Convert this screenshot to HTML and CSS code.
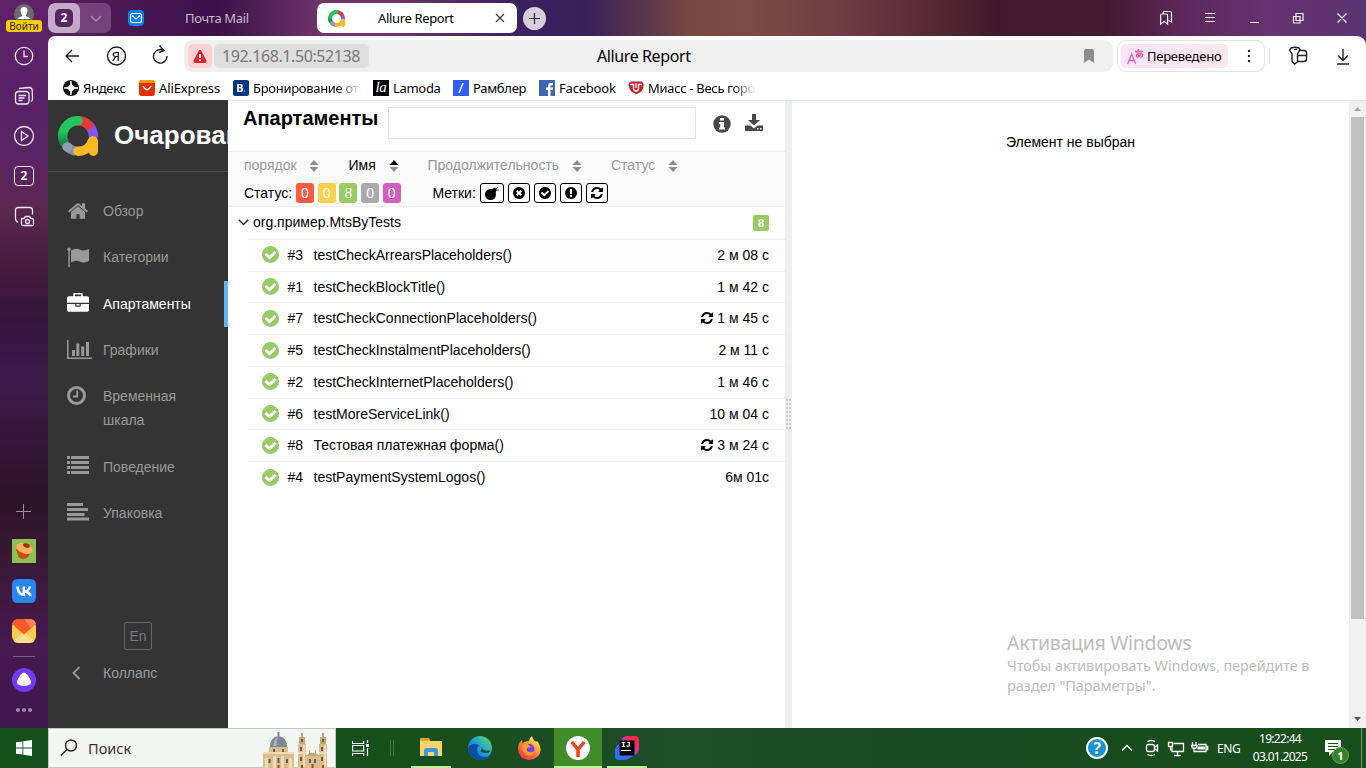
FILE: index.html
```html
<!DOCTYPE html>
<html lang="ru">
<head>
<meta charset="utf-8">
<title>Allure Report</title>
<link rel="stylesheet" href="styles.css">
</head>
<body>
<svg class="defs" width="0" height="0">
  <symbol id="refresh" viewBox="0 0 1792 1792"><path fill="currentColor" d="M1639 1056q0 5-1 7-64 268-268 434.5t-478 166.5q-146 0-282.5-55t-243.5-157l-129 129q-19 19-45 19t-45-19-19-45v-448q0-26 19-45t45-19h448q26 0 45 19t19 45-19 45l-137 137q71 66 161 102t187 36q134 0 250-65t186-179q11-17 53-117 8-23 30-23h192q13 0 22.5 9.5t9.5 22.5zm25-800v448q0 26-19 45t-45 19h-448q-26 0-45-19t-19-45 19-45l138-138q-148-137-349-137-134 0-250 65t-186 179q-11 17-53 117-8 23-30 23h-199q-13 0-22.5-9.5t-9.5-22.5v-7q65-268 270-434.5t480-166.500q146 0 284 55.500t245 156.500l130-129q19-19 45-19t45 19 19 45z"/></symbol>
  <symbol id="check" viewBox="128 128 1536 1536"><path fill="currentColor" d="M1412 734q0-28-18-46l-91-90q-19-19-45-19t-45 19l-408 407-226-226q-19-19-45-19t-45 19l-91 90q-18 18-18 46 0 27 18 45l362 362q19 19 45 19 27 0 46-19l543-543q18-18 18-45zm252 162q0 209-103 385.500t-279.500 279.500-385.500 103-385.500-103-279.500-279.500-103-385.500 103-385.500 279.500-279.500 385.500-103 385.500 103 279.500 279.500 103 385.500z"/></symbol>
  <symbol id="sort" viewBox="0 0 10 12"><path class="up" d="M5 0 9.500 5H.5z"/><path class="down" d="M5 12 .5 7h9z"/></symbol>
  <symbol id="allure" viewBox="0 0 40 40">
    <g fill="none" stroke-width="9.400" stroke-linecap="round">
      <path stroke="#8256f0" d="M32 10.500A15.300 15.300 0 0 1 35.300 20"/>
      <path stroke="#e03a3c" d="M20 4.700A15.300 15.300 0 0 1 30.800 9.200"/>
      <path stroke="#8291a8" d="M8.800 30.500A15.300 15.300 0 0 0 16 34.800"/>
      <path stroke="url(#gg)" d="M6 26.300A15.300 15.300 0 0 1 20 4.700"/>
      <path stroke="#8f9db2" d="M9.300 31l.5.4"/>
      <path stroke="#fbb924" d="M20 35.300A15.300 15.300 0 0 0 34.500 25M35.300 25V35.300"/>
    </g>
  </symbol>
  <linearGradient id="gg" x1="0" y1="1" x2="0" y2="0"><stop stop-color="#178a44"/><stop offset=".5" stop-color="#22c55e"/></linearGradient>
  <linearGradient id="edge" x1="0" y1="1" x2="1" y2="0"><stop stop-color="#0c59a4"/><stop offset=".5" stop-color="#1b9de2"/><stop offset="1" stop-color="#6be04a"/></linearGradient>
  <linearGradient id="fox" x1="0" y1="1" x2=".7" y2="0"><stop stop-color="#f5156c"/><stop offset=".5" stop-color="#ff7139"/><stop offset="1" stop-color="#fff44f"/></linearGradient>
  <linearGradient id="ij" x1="0" y1="1" x2="1" y2="0"><stop stop-color="#087cfa"/><stop offset=".5" stop-color="#6b57ff"/><stop offset=".75" stop-color="#fe2857"/></linearGradient>
</svg>

<div class="screen">
  <nav class="rail">
    <div class="login">
      <svg width="20" height="20" viewBox="0 0 20 20"><circle cx="10" cy="10" r="10" fill="#6e6a6d"/><path fill="#fff" d="M10 3c2.600 0 3.800 2 3.400 4.500-.2 1.700-1 2.700-1.400 3.200v1.500c2 .6 3.500 1.200 4.500 2.800H3.500c1-1.600 2.500-2.200 4.500-2.800v-1.500C7.500 10 6.800 9.200 6.600 7.500 6.300 5 7.400 3 10 3z"/></svg>
      <span class="login-tag">Войти</span>
    </div>
    <div class="cell"><svg width="24" height="24" class="line"><circle cx="12" cy="12" r="8.700"/><path d="M12 6.500V12.500h4"/></svg></div>
    <div class="cell"><svg width="24" height="24" class="line"><rect x="3.500" y="7.500" width="13.500" height="12.500" rx="3"/><path d="M7 4.500 17 3.500q3 0 3.200 2.500l.3 9q0 2-1.500 2.500M6.500 11.500h7.500M6.500 14h6M6.500 16.500h4"/></svg></div>
    <div class="cell"><svg width="24" height="24" class="line"><circle cx="12" cy="12" r="9.500"/><path d="m9.500 7.500 6.500 4.500-6.500 4.500z"/></svg></div>
    <div class="cell"><span class="two">2</span></div>
    <div class="cell"><svg width="24" height="24" class="line"><path d="M6 18Q3.500 17.500 3.500 14.500V6.500q0-3 3-3h11q3 0 3 3v4"/><path d="M9.500 14.500h2.500l1.500-2h4l1.500 2H20q1.500 0 1.500 1.500v4q0 1.500-1.500 1.500H11q-1.500 0-1.500-1.500z"/><circle cx="15.500" cy="17.500" r="2"/></svg></div>
    <div class="grow"></div>
    <div class="cell"><svg width="24" height="24" stroke="#a48aa6"><path d="M11.500 5v15M4 12.500h15"/></svg></div>
    <div class="cell"><svg width="24" height="24"><path fill="#8cc152" d="M0 0h24v24H0z"/><path fill="#c94a12" d="m4 10 2.500 8q4 4 9.500 0l3-5z"/><ellipse cx="12.500" cy="9.500" rx="8.500" ry="5" fill="#f9b25e" transform="rotate(20 12.500 9.500)"/><ellipse cx="14.500" cy="6.500" rx="3.500" ry="2" fill="#ac2a0a" transform="rotate(20 14.500 6.500)"/></svg></div>
    <div class="cell"><svg width="24" height="24"><rect width="24" height="24" rx="5.500" fill="#2787f5"/><path fill="#fff" d="M12.800 17.200C7.500 17.200 4.500 13.500 4.300 7.500h2.700c.1 4.400 2 6.200 3.600 6.600V7.500h2.500v3.800c1.500-.2 3.200-1.900 3.700-3.800h2.500c-.4 2.300-2.100 4-3.300 4.700 1.200.6 3.200 2 4 5h-2.800c-.6-1.800-2-3.300-4.100-3.500v3.500z"/></svg></div>
    <div class="cell"><svg width="24" height="24"><rect width="24" height="24" rx="7" fill="#ffc94b"/><path fill="#ffdf87" d="m12 13 10.500 9Q21 24 17 24H7Q3 24 1.500 22z"/><path fill="#fa5a28" d="M.2 5Q1 0 7 0h10q6 0 6.800 5L12 15.500z"/><path fill="#ff9b78" d="M12 0h5q6 0 6.800 5L19 9z" opacity=".6"/></svg></div>
    <hr class="rail-line">
    <div class="cell"><svg width="24" height="24"><circle cx="12" cy="12" r="12" fill="#7639fa"/><path fill="#fff" d="M12 4.500c2.500 0 7 7 7 9.800 0 2.700-4 3.700-7 3.700s-7-1-7-3.700c0-2.800 4.500-9.800 7-9.800z"/></svg></div>
    <div class="dots"><i></i><i></i><i></i></div>
  </nav>

  <section class="browser">
    <header class="tabs">
      <div class="group"><span class="group-num"><b>2</b></span><svg width="31" height="30" fill="none" stroke="#a78aaa" stroke-width="1.500"><path d="m11 13 5 5 5-5"/></svg></div>
      <div class="tab-mail"><svg width="16" height="16"><rect width="16" height="16" rx="4" fill="#0a7cff"/><rect x="2.500" y="3.500" width="11" height="9" rx="2" fill="none" stroke="#fff" stroke-width="1.200"/><path d="m4 5.500 4 3.500 4-3.500" fill="none" stroke="#fff" stroke-width="1.200"/></svg><span>Почта Mail</span></div>
      <div class="tab-active"><svg width="17" height="17"><use href="#allure"/></svg><span>Allure Report</span><svg class="x" width="10" height="10" stroke="#333c4c" stroke-width="1.200"><path d="m1 1 8 8M9 1 1 9"/></svg></div>
      <div class="newtab"><svg width="23" height="23" stroke="#2c2438" stroke-width="1.200"><path d="M11.500 6v11M6 11.500h11"/></svg></div>
      <div class="grow"></div>
      <svg class="wins" width="206" height="36" fill="none" stroke="#f3eef5" stroke-width="1.200">
        <path d="M.6 15.500v8.500l3.500-2.500 3.500 2.500V15.500q0-1.500-1.500-1.500H2q-1.400 0-1.400 1.500zM3 13.500v-.5Q3 11.500 4.500 11.500H10q1.500 0 1.500 1.500v9l-3-1.500"/>
        <path d="M45 13.500h10M45 17.500h10M45 21.500h10M90 22.500h9"/>
        <path d="M136 13.500h7v7h-7zM133.500 20.500v-4H140v6.500h-6.500zM177.500 13.500l9 9m0-9-9 9" />
      </svg>
    </header>

    <div class="window">
      <div class="address">
        <svg class="nav" width="124" height="32" fill="none" stroke="#1b1b1b" stroke-width="1.400"><path d="M14 16H1m6-6-6 6 6 6"/><circle cx="51.500" cy="16" r="9"/><path d="M102 16a6.800 6.800 0 1 1-3.200-5.500M94.500 5.500l4.500 5-5 2"/></svg>
        <b class="ya">Я</b>
        <div class="omni">
          <span class="warn"><svg width="14" height="13"><path fill="#e0202c" d="M7 0Q8 0 8.500 1l5 10q.5 2-1.500 2H2Q0 13 .5 11l5-10Q6 0 7 0z"/><path stroke="#fff" stroke-width="1.800" d="M7 4v4M7 9.500v1.600"/></svg></span>
          <span class="url">192.168.1.50:52138</span>
          <span class="page-title">Allure Report</span>
          <svg class="mark" width="10" height="14"><path fill="#8c8c8c" d="M0 2Q0 0 2 0h6q2 0 2 2v12L5 10.500 0 14z"/></svg>
        </div>
        <div class="translate"><span class="pink"><svg width="17" height="17" fill="none" stroke="#f056b0" stroke-width="1.300"><path stroke="#e85acb" d="m.7 16 4-10 4 10M2 12.500h5.500"/><path d="M8 3.500h8M11.500 1q-1 4 .5 8M14.500 5q-1 4-4.500 4-2-2 2.500-3.500 4-.5 3 2.500-.5 1-2 1.300"/></svg><span>Переведено</span></span><svg width="4" height="14" fill="#222"><circle cx="2" cy="2" r="1.200"/><circle cx="2" cy="7" r="1.200"/><circle cx="2" cy="12" r="1.200"/></svg></div>
        <svg class="tools" width="84" height="32" fill="none" stroke="#222" stroke-width="1.400"><path stroke="#ddd" stroke-width="1" d="M.5 8v16"/><path d="M22 8q4-1.500 8 0l1 1.500-2.500 4.500v8l-3 2-2.500-2.500V14l-2.500-4zM30 10.500h5q2.500 0 2.500 2.500v6q0 2.500-2.500 2.500h-6M29 15.500h8M25 9.500h3M74 9v11.500m-5-5 5 5 5-5M68 24h12"/></svg>
      </div>
      <div class="bookmarks">
        <div class="bm w1"><svg width="16" height="16"><circle cx="8" cy="8" r="8" fill="#111"/><path fill="#fff" d="M8 1q0 7 7 7-7 0-7 7 0-7-7-7 7 0 7-7z" stroke="#fff" stroke-width=".8"/></svg><span>Яндекс</span></div>
        <div class="bm w2"><svg width="16" height="16"><rect width="16" height="16" rx="3" fill="#e62e04"/><path fill="#ff9900" d="M0 3Q0 0 3 0h10q3 0 3 3z"/><path d="M4 6q4 7.500 8 0" fill="none" stroke="#fff" stroke-width="1.500"/></svg><span>AliExpress</span></div>
        <div class="bm w3"><i class="ico booking">B<em>.</em></i><span>Бронирование оте</span></div>
        <div class="bm w4"><i class="ico lamoda">la</i><span>Lamoda</span></div>
        <div class="bm w5"><svg width="16" height="16"><path fill="#315efb" d="M0 0h16v16H0z"/><path d="M6 13 10 3" stroke="#fff" stroke-width="1.500"/></svg><span>Рамблер</span></div>
        <div class="bm w6"><svg width="16" height="16"><path fill="#4267b2" d="M0 0h16v16H0z"/><path fill="#fff" d="M9 16v-6H7V7.500h2V6q0-3 3-3h2v2.300h-1.500q-1 0-1 1v1.200H14l-.4 2.500h-2.100v6z"/></svg><span>Facebook</span></div>
        <div class="bm w7"><svg width="16" height="16" fill="none"><path fill="#c91f2d" d="M3 1.500h10q3 .5 2.500 4.500-.5 6-6 7.500L7 14.500l.3-1Q2 12 1 7-.5 2 3 1.500z"/><path d="M2 4.500h3.500v4q0 2.500 2.500 2.500t2.500-2.500v-4H14M8 3v5" stroke="#fff" stroke-width="1.300"/></svg><span>Миасс - Весь горо</span></div>
      </div>

      <main class="content">
        <aside class="side">
          <div class="brand"><svg width="40" height="40"><use href="#allure"/></svg><span>Очарование</span></div>
          <ul class="menu">
            <li><svg width="22" height="22" viewBox="0 0 1792 1792"><path fill="currentColor" d="M1472 992v480q0 26-19 45t-45 19h-384v-384h-256v384h-384q-26 0-45-19t-19-45v-480q0-1 .5-3t.5-3l575-474 575 474q1 2 1 6zm223-69l-62 74q-8 9-21 11h-3q-13 0-21-7l-692-577-692 577q-12 8-24 7-13-2-21-11l-62-74q-8-10-7-23.500t11-21.500l719-599q32-26 76-26t76 26l244 204v-195q0-14 9-23t23-9h192q14 0 23 9t9 23v408l219 182q10 8 11 21.500t-7 23.500z"/></svg><span>Обзор</span></li>
            <li><svg width="22" height="22" fill="currentColor"><circle cx="2" cy="3.300" r="1.700"/><path d="M1.300 3h1.400v18H1.300zM4 4.500Q8 2 11 3t4.500 1.500Q18 4.500 22 3v12q-4 2-7 1.200-4-1.700-6-1.500T4 16.500z"/></svg><span>Категории</span></li>
            <li class="on"><svg width="22" height="22" viewBox="0 0 1792 1792"><path fill="currentColor" d="M640 256h512v-128h-512v128zm1152 640v480q0 66-47 113t-113 47h-1472q-66 0-113-47t-47-113v-480h672v160q0 26 19 45t45 19h320q26 0 45-19t19-45v-160h672zm-768 0v128h-256v-128h256zm768-480v384h-1792v-384q0-66 47-113t113-47h352v-160q0-40 28-68t68-28h576q40 0 68 28t28 68v160h352q66 0 113 47t47 113z"/></svg><span>Апартаменты</span></li>
            <li><svg width="25" height="22" fill="currentColor"><path d="M0 1h1.500v17.500H25V20H0zM5 11h3v6H5zM9.300 4.500h3V17h-3zM14.200 7.500h3V17h-3zM19 3h3v14h-3z"/></svg><span>Графики</span></li>
            <li><svg width="22" height="22" fill="none" stroke="currentColor"><circle cx="9.500" cy="10.500" r="8" stroke-width="3"/><path d="M10.200 5.500v6H6" stroke-width="1.800"/></svg><span>Временная<br>шкала</span></li>
            <li><svg width="22" height="22" fill="currentColor"><path d="M0 1h3v3H0zM4 1h18v3H4zM0 6h3v3H0zM4 6h18v3H4zM0 11h3v3H0zM4 11h18v3H4zM0 16h3v3H0zM4 16h18v3H4z"/></svg><span>Поведение</span></li>
            <li><svg width="22" height="22" fill="currentColor"><path d="M0 1h16v3H0zM0 6h21v3H0zM0 11h17.500v3H0zM0 15.500h22v3H0z"/></svg><span>Упаковка</span></li>
          </ul>
          <div class="grow"></div>
          <div class="lang">En</div>
          <div class="collapse"><svg width="9" height="14" fill="none" stroke="#999" stroke-width="1.800"><path d="M7.500 1 1.500 7l6 6"/></svg><span>Коллапс</span></div>
        </aside>

        <section class="suites">
          <div class="head">
            <h1>Апартаменты</h1>
            <div class="search"></div>
            <svg class="info" width="18" height="18"><circle cx="9" cy="9" r="8.700" fill="#484848"/><path fill="#fff" d="M7 3h4v2.500H7zM6 7h5v5.500h1.200v2H6v-2h1.200V9H6z"/></svg>
            <svg class="dl" width="18" height="18" fill="#484848"><path d="M7 0h4v6h4L9 11.500 3 6h4z"/><path fill-rule="evenodd" d="M0 11.500h5.500l3.500 3 3.500-3H18V17H0zM12 14h1.500v1.500H12zM15 14h1.500v1.500H15z"/></svg>
          </div>
          <div class="filters">
            <div class="sorts">
              <span class="s1">порядок</span><svg class="sort" width="10" height="12"><use href="#sort"/></svg>
              <span class="s2">Имя</span><svg class="sort sel" width="10" height="12"><use href="#sort"/></svg>
              <span class="s3">Продолжительность</span><svg class="sort" width="10" height="12"><use href="#sort"/></svg>
              <span class="s4">Статус</span><svg class="sort" width="10" height="12"><use href="#sort"/></svg>
            </div>
            <div class="marks">
              <span class="lbl">Статус:</span>
              <b class="st failed">0</b><b class="st broken">0</b><b class="st passed">8</b><b class="st skipped">0</b><b class="st unknown">0</b>
              <span class="lbl second">Метки:</span>
              <span class="mk bomb"><svg width="16" height="14"><circle cx="6.500" cy="8.500" r="5.500"/><path d="m8 3 3-1.500L13 4l-2 3z"/><path stroke="#555" d="m12 3 2-2m-1 3h2"/></svg></span>
              <span class="mk"><svg width="12" height="12"><circle cx="6" cy="6" r="6"/><path stroke="#fff" stroke-width="2" d="m3.700 3.700 4.600 4.600m0-4.600L3.700 8.300"/></svg></span>
              <span class="mk"><svg width="12" height="12"><use href="#check"/></svg></span>
              <span class="mk"><svg width="12" height="12"><circle cx="6" cy="6" r="6"/><path stroke="#fff" stroke-width="2" d="M6 2v5M6 8v2"/></svg></span>
              <span class="mk"><svg width="14" height="14"><use href="#refresh"/></svg></span>
            </div>
          </div>
          <div class="suite"><svg width="11" height="7" fill="none" stroke="#222" stroke-width="1.500"><path d="m.8.800 4.700 4.700L10.200.800"/></svg><span>org.пример.MtsByTests</span><b>8</b></div>
          <ol class="tests">
            <li><svg class="ok"><use href="#check"/></svg><i>#3</i><span>testCheckArrearsPlaceholders()</span><time>2 м 08 с</time></li>
            <li><svg class="ok"><use href="#check"/></svg><i>#1</i><span>testCheckBlockTitle()</span><time>1 м 42 с</time></li>
            <li><svg class="ok"><use href="#check"/></svg><i>#7</i><span>testCheckConnectionPlaceholders()</span><time><svg class="re"><use href="#refresh"/></svg>1 м 45 с</time></li>
            <li><svg class="ok"><use href="#check"/></svg><i>#5</i><span>testCheckInstalmentPlaceholders()</span><time>2 м 11 с</time></li>
            <li><svg class="ok"><use href="#check"/></svg><i>#2</i><span>testCheckInternetPlaceholders()</span><time>1 м 46 с</time></li>
            <li><svg class="ok"><use href="#check"/></svg><i>#6</i><span>testMoreServiceLink()</span><time>10 м 04 с</time></li>
            <li><svg class="ok"><use href="#check"/></svg><i>#8</i><span>Тестовая платежная форма()</span><time><svg class="re"><use href="#refresh"/></svg>3 м 24 с</time></li>
            <li><svg class="ok"><use href="#check"/></svg><i>#4</i><span>testPaymentSystemLogos()</span><time>6м 01с</time></li>
          </ol>
        </section>
        <div class="gutter"><div class="grip"></div></div>
        <section class="detail">Элемент не выбран</section>
        <div class="scroll"><svg width="17" height="16"><path fill="#a3a3a3" d="m8.500 6 3.500 4H5z"/></svg><div class="thumb"></div><svg width="17" height="17"><path fill="#505050" d="M5 6h7l-3.500 4z"/></svg></div>
      </main>
    </div>
  </section>

  <div class="watermark"><h2>Активация Windows</h2><p>Чтобы активировать Windows, перейдите в</p><p class="p2">раздел "Параметры".</p></div>

  <footer class="taskbar">
    <div class="start"><svg width="16" height="16" fill="#fff"><path d="M0 2.300 6.500 1.400v6.200H0zM7.300 1.200 16 0v7.600H7.300zM0 8.400h6.500v6.200L0 13.700zM7.300 8.400H16V16l-8.700-1.200z"/></svg></div>
    <div class="find"><svg width="18" height="18" fill="none" stroke="#222" stroke-width="1.400"><circle cx="11" cy="6.500" r="5.500"/><path d="M7 10.500.8 16.500"/></svg><span>Поиск</span>
      <svg class="castle" width="66" height="36" viewBox="0 0 66 36">
        <path fill="#d9bd8e" d="M0 20h31v16H0zM6 15h19v6H6zM35 12h8v24h-8zM56 12h8v24h-8zM43 23h13v13H43z"/>
        <path fill="#f0dcb4" d="M0 20h31v2H0zM2 26h3v10H2zM10 24h3v12h-3zM18 24h3v12h-3zM26 26h3v10h-3zM35 20h8v2h-8zM56 20h8v2h-8zM40 13h2v22h-2zM61 13h2v22h-2z"/>
        <path fill="#7e8798" d="M7 15q0-10 8.500-11Q24 5 24 15zM14.500 0h2v5h-2z"/>
        <path fill="#a9b2c2" d="M10 14q1-8 5.500-9-2 3-2 9z"/>
        <path fill="#c8a777" d="M36 12V5h2V1h2v4h2v7zM57 12V5h2V1h2v4h2v7zM43 24l3-3v-3h1v3h5v-3h1v3l3 3z"/>
        <path fill="#6c5c55" d="M5.500 27h2v4h-2zM14.500 26h2v5h-2zM23 27h2v4h-2zM38 7h2v3h-2zM59 7h2v3h-2zM37 15h2v4h-2zM37 25h2v4h-2zM58 15h2v4h-2zM58 25h2v4h-2zM46 27h2v4h-2zM51 27h2v4h-2zM10 17h2v3h-2zM19 17h2v3h-2z"/>
        <path fill="#a4492f" d="M14.500 33h2v3h-2zM38 33h2v3h-2zM59 33h2v3h-2zM48.500 32h2v4h-2z"/>
      </svg>
    </div>
    <div class="app view"><svg width="17" height="17" fill="none" stroke="#fff" stroke-width="1.200"><path d="M.6 1v2.500h11V1M.6 16v-2.500h11V16M.6 5.500h11v5.500H.6zM15.500 0v3M15.500 8v8"/><path fill="#fff" d="M14.500 4.500h2v2h-2z"/></svg></div>
    <div class="sep"></div>
    <div class="app run folder"><svg width="22" height="20"><path fill="#e5a50f" d="M0 1q0-1 1-1h8l1.500 3H22v5H0z"/><path fill="#fbd568" d="M0 3h22v15H0z"/><path fill="#3f97dd" d="M4 18v-6q0-2 2-2h10q2 0 2 2v6h-4v-4H8v4z"/></svg></div>
    <div class="app"><svg width="24" height="24"><circle cx="12" cy="12" r="12" fill="url(#edge)"/><path fill="#0d4f9e" d="M9 13q0 7 6.500 8 4 .5 6-1.500-4 5-10 4.500Q1 22 0 13q0-4 5.500-5 4-.5 6.500 2-3 0-3 3z"/><path fill="#194f32" d="M12.500 14.500q1.500-1.500 1-3.500 2 5 9 3.500-1 2.500-4.500 2.500-4.500 0-5.500-2.500z"/></svg></div>
    <div class="app"><svg width="24" height="24"><path fill="url(#fox)" d="M1 13Q1 7 5 4l.5 3Q9 5 12 5q0-3 3-5 1 4 4 6l1-1q3.500 4 3.500 9-.5 9-11.500 10Q1.500 23 1 13z"/><circle cx="12.500" cy="13" r="5" fill="#7542e5"/><path fill="#ff9b24" d="M5 9q4-2 7 0l2 2-4 1q-1 3 2 4 3 1 5-1-1 5-6 4.500-6-1-6-10.500z"/></svg></div>
    <div class="app run now"><svg width="24" height="24"><circle cx="12" cy="12" r="12" fill="#fff"/><path fill="none" stroke="#fc3f1d" stroke-width="3.500" d="m5.800 6 6.200 7.500L18.200 6M12 13v8"/></svg></div>
    <div class="app run idea"><svg width="24" height="24"><path fill="url(#ij)" d="M5 6q2-6 8-6h7q4 0 4 4v9q0 4-4 6l-7 4q-2 1-4 1H4q-4 0-4-4v-6q0-2 2-4z"/><path fill="#000" d="M4.500 4.500h15v15h-15z"/></svg><b>IJ</b></div>
    <div class="grow"></div>
    <div class="help">?</div>
    <svg class="tray" width="90" height="24" fill="none" stroke="#fff" stroke-width="1.300"><path d="m1 14.500 5-5 5 5M26.500 5.500q4-2 7.500 0M26.500 18.500q4 2 7.500 0"/><rect x="25.500" y="8.500" width="8" height="7" rx="2"/><path d="m34 11 2.500-2v6L34 13M52.500 7.500h10v8H51v-4M56.500 16v3M53 19.500h7M47.500 6.500h4v4h-4zM49.500 11v3.500M71.500 6v3M75 6v3M70.500 9.500h5.500q0 3-2.700 3t-2.800-3zM73 13v2.500h12v-7h-8M85.500 10.500h1.200v3h-1.200"/><path fill="#fff" stroke="none" d="M76.500 10.500H84v3h-7.500z"/></svg>
    <span class="eng">ENG</span>
    <div class="clock"><span>19:22:44</span><span>03.01.2025</span></div>
    <div class="note"><svg width="17" height="17"><path fill="#fff" d="M0 0h16v12H8l-4 4v-4H0z"/><path stroke="#185018" d="M3 3.500h10M3 6.500h10M3 9.500h7"/></svg><b>1</b></div>
  </footer>
</div>
</body>
</html>
```
FILE: styles.css
```css
* { box-sizing: border-box; }
body { margin: 0; font-family: "Liberation Sans", Arial, sans-serif; font-size: 14px; color: #000; }
svg { display: block; flex: none; }
.defs { position: absolute; }
i, em { font-style: normal; }
.grow { flex: 1; }
.screen {
  width: 1366px; height: 768px; overflow: hidden; position: relative;
  display: grid; grid-template: 728px 40px / 48px 1318px;
}

/* Browser rail */
.rail {
  display: flex; flex-direction: column; align-items: center;
  font-family: "Noto Sans", sans-serif;
  background: linear-gradient(180deg, #5e2367 0, #582168 100px, #592464 150px, #5a2650 210px, #431b3c 270px, #35153d 320px, #3e1a49 380px, #36163a 440px, #2b1225 500px, #391936 560px, #47194f 640px, #3f1850 728px);
}
.login { height: 36px; width: 40px; display: flex; flex-direction: column; align-items: center; padding-top: 4px; }
.login-tag { margin-top: -4px; width: 36px; height: 12px; background: #fc0; border-radius: 3px; font-size: 10px; line-height: 12px; text-align: center; color: #222; }
.cell { height: 40px; display: flex; align-items: center; justify-content: center; }
.line { fill: none; stroke: #eee6f0; stroke-width: 1.300; }
.two { width: 20px; height: 20px; border: 1.300px solid #eee6f0; border-radius: 4px; color: #fff; font-size: 12px; font-weight: 600; line-height: 18px; text-align: center; }
.rail-line { width: 22px; height: 1px; border: 0; background: #7c5a85; margin: 5px 0 3px; }
.dots { height: 28px; display: flex; gap: 2px; padding-top: 8px; }
.dots i { width: 4px; height: 4px; border-radius: 50%; background: #a58bad; }

/* Tab strip */
.browser { display: flex; flex-direction: column; background: linear-gradient(90deg, #57225f 0, #451650 100px, #3a1248 170px, #6e3569 275px, #6e3569 340px, #3a2160 470px, #38205a 540px, #764842 640px, #7b4b46 700px, #6e3b42 800px, #401a2a 950px, #421a30 1060px, #5a2757 1130px, #663270 1220px, #5a3470 1318px); }
.tabs { height: 36px; display: flex; align-items: center; font-family: "Noto Sans", sans-serif; font-size: 13px; }
.group { display: flex; width: 63px; height: 30px; border-radius: 7px; background: #74427b; overflow: hidden; }
.group-num { width: 32px; background: #c4a9c8; border-radius: 7px; display: flex; align-items: center; justify-content: center; }
.group-num b { width: 18px; height: 18px; border-radius: 5px; background: #5a2463; color: #fff; font-size: 12px; line-height: 18px; text-align: center; }
.tab-mail { width: 206px; padding-left: 17px; display: flex; align-items: center; color: #c9b7cc; letter-spacing: -.35px; }
.tab-mail span { margin-left: 41px; }
.tab-active { width: 200px; height: 30px; background: #fff; border-radius: 7px; display: flex; align-items: center; padding: 0 12px 0 11px; letter-spacing: -.35px; }
.tab-active span { margin-left: 33px; }
.tab-active .x { margin-left: auto; }
.newtab { margin-left: 6px; background: #d7cddd; border-radius: 50%; }

/* Toolbar */
.window { height: 692px; background: #fff; border-radius: 7px 9px 0 0; display: flex; flex-direction: column; overflow: hidden; }
.address { height: 40px; display: flex; align-items: center; padding-left: 17px; font-family: "Noto Sans", sans-serif; }
.nav { margin-right: -12px; }
.ya { width: 12px; margin-left: -67px; margin-right: 62px; font-size: 13px; font-weight: 400; text-align: center; }
.omni { width: 929px; height: 32px; border-radius: 9px; background: #efefef; display: flex; align-items: center; padding-left: 4px; }
.warn { width: 24px; height: 24px; border-radius: 5px; background: #ffd0d2; display: flex; align-items: center; justify-content: center; }
.url { margin-left: 2px; width: 155px; height: 24px; padding-left: 8px; border-radius: 5px; background: #dedede; color: #777; font-size: 16px; line-height: 24px; letter-spacing: -.4px; white-space: nowrap; }
.page-title { margin-left: 228px; width: 94px; font-size: 16px; letter-spacing: -.4px; white-space: nowrap; }
.mark { margin-left: 393px; }
.translate { margin-left: 4px; width: 148px; height: 32px; border: 1px solid #e3e3e3; border-radius: 9px; display: flex; align-items: center; padding-left: 3px; }
.pink { width: 107px; height: 24px; border-radius: 5px; background: linear-gradient(90deg, #fbe4fa, #ffe7ec); display: flex; align-items: center; gap: 3px; padding-left: 6px; margin-right: 19px; font-size: 13px; letter-spacing: -.25px; }
.tools { margin-left: 4px; }
.bookmarks { height: 24px; display: flex; padding-left: 15px; font-family: "Noto Sans", sans-serif; font-size: 13px; letter-spacing: -.3px; }
.bm { display: flex; align-items: center; gap: 4px; white-space: nowrap; overflow: hidden; flex: none; }
.bm svg, .ico { flex: none; }
.w1 { width: 76px; } .w2 { width: 94px; letter-spacing: -.1px; } .w3 { width: 128px; margin-right: 12px; } .w4 { width: 80px; }
.w5 { width: 86px; } .w6 { width: 89px; letter-spacing: -.2px; } .w7 { width: 128px; }
.w3, .w7 { -webkit-mask-image: linear-gradient(90deg, #000 82%, transparent); mask-image: linear-gradient(90deg, #000 82%, transparent); }
.ico { width: 16px; height: 16px; color: #fff; text-align: center; line-height: 16px; }
.booking { background: #003580; border-radius: 2px; font-size: 11px; font-weight: 700; }
.booking em { color: #25a8f5; }
.lamoda { background: #000; font: italic 15px/15px "Liberation Serif", serif; }

/* Report */
.content { flex: 1; display: grid; grid-template-columns: 180px 557px 7px 557px 17px; }
.side { background: #343434; color: #999; display: flex; flex-direction: column; overflow: hidden; height: 628px; }
.brand { height: 72px; border-bottom: 1px solid #4c4c4c; padding: 0 0 0 10px; display: flex; align-items: center; color: #fff; font-size: 26px; font-weight: 700; flex: none; }
.brand span { margin-left: 16px; }
.menu { list-style: none; margin: 16px 0 0; padding: 0; }
.menu li { display: flex; align-items: flex-start; padding: 11.150px 0 11.150px 19px; line-height: 24px; border-right: 4px solid transparent; }
.menu svg { margin: .8px 14px 0 0; }
.menu svg[width="25"] { margin-right: 11px; }
.menu .on { color: #fff; border-right-color: #64b5f6; }
.lang { width: 28px; height: 28px; border: 1px solid #666; border-radius: 2px; margin-left: 76px; font-size: 14px; line-height: 26px; text-align: center; color: #777; }
.collapse { display: flex; align-items: center; height: 46px; margin-bottom: 32px; padding-left: 24px; flex: none; }
.collapse span { margin-left: 22px; }

.suites { border-top: 1px solid #e3e3e3; }
.head { height: 50px; display: flex; align-items: flex-start; }
.head h1 { width: 145px; margin: 5px 0 0 15px; font-size: 20px; line-height: 24px; white-space: nowrap; }
.search { width: 308px; height: 32px; margin-top: 6px; border: 1px solid #e5e5e5; }
.info { margin: 14px 0 0 17px; }
.dl { margin: 13px 0 0 14px; }
.filters { height: 56px; border: 1px solid #eceff1; border-width: 1px 0; background: #fbfbfb; }
.sorts, .marks { display: flex; align-items: center; padding-left: 16px; }
.sorts { height: 26px; color: #999; }
.sort { fill: #8f8f8f; margin-top: 2px; }
.sel { --up: #000; }
#sort .up { fill: var(--up, #8f8f8f); }
.s1 { width: 65px; } .s2 { width: 40px; margin-left: 29.500px; margin-right: .5px; color: #000; } .s3 { width: 144.500px; margin-left: 28.500px; } .s4 { width: 57px; margin-left: 29px; }
.marks { height: 29px; }
.lbl { width: 52px; }
.second { width: 48px; margin-left: 28px; }
.st { width: 18px; height: 20px; margin-right: 3.700px; border-radius: 3px; color: #fff; font-weight: 400; line-height: 20px; text-align: center; }
.failed { background: #fd5a3e; } .broken { background: #ffd050; } .passed { background: #97cc64; } .skipped { background: #aaa; } .unknown { background: #d35ebe; }
.mk { width: 22px; height: 20px; margin-right: 3.800px; border: 1px solid #000; border-radius: 3px; display: flex; align-items: center; justify-content: center; background: #fff; }
.bomb { width: 24px; }
.suite { height: 32px; display: flex; align-items: center; padding: 0 16px 2px 10px; }
.suite span { flex: 1; margin-left: 4px; }
.suite b { width: 16px; height: 16px; margin-top: 2px; border-radius: 2px; background: #97cc64; color: #fff; font-size: 11px; line-height: 17px; text-align: center; }
.suite svg { margin-bottom: 0; }
.tests { list-style: none; margin: 0 0 0 20px; padding: 0; }
.tests li { height: 31.740px; border-top: 1px solid #eceff1; display: flex; align-items: center; padding: 0 16px 1px 14px; }
.tests li:first-child { background: #fdfdfd; }
.ok { width: 17px; height: 17px; color: #97cc64; }
.tests i { width: 26px; margin-left: 8.500px; }
.tests span { flex: 1; }
.tests time { display: flex; align-items: center; }
.re { width: 14px; height: 14px; margin-right: 3px; }
.gutter { background: #eceff1; border-top: 1px solid #dde0e2; display: flex; align-items: center; justify-content: center; }
.grip { width: 5px; height: 31px; background: repeating-linear-gradient(90deg, transparent 0 2px, #eceff1 2px 3px), repeating-linear-gradient(180deg, #ccc 0 2px, #eceff1 2px 4px); }
.detail { border-top: 1px solid #e3e3e3; padding-top: 33px; text-align: center; }
.scroll { background: #f1f1f1; border-top: 1px solid #e3e3e3; display: flex; flex-direction: column; }
.thumb { width: 13px; height: 502px; margin: 0 0 auto 2px; background: #c1c1c1; }

.watermark { position: absolute; left: 1007px; top: 630px; color: #bcbcbc; font-family: "Noto Sans", sans-serif; white-space: nowrap; }
.watermark h2 { margin: 0; font-size: 19.500px; line-height: 26px; font-weight: 400; letter-spacing: -.3px; }
.watermark p { margin: -1px 0 0; font-size: 14.500px; line-height: 20px; letter-spacing: -.08px; }
.watermark .p2 { margin: 0; }

/* Taskbar */
.taskbar { grid-column: 1 / 3; display: flex; align-items: center; background: linear-gradient(90deg, #14501c, #174f1b 30%, #1e4d27 50%, #184a1f 70%, #174f1b); font-family: "Noto Sans", sans-serif; color: #fff; }
.start { width: 48px; display: flex; justify-content: center; }
.find { width: 288px; height: 40px; background: #f3f5f2; border: 1px solid #c5c9c4; display: flex; align-items: center; padding-left: 11px; color: #333; font-size: 14.500px; }
.find span { margin-left: 10px; }
.castle { margin: 3px 6px 0 auto; }
.app { width: 48px; height: 40px; margin-right: 1px; display: flex; align-items: center; justify-content: center; position: relative; }
.view { margin: 0; }
.sep { width: 4px; height: 16px; border: 1px solid #486f48; border-width: 0 1px; margin: 0 13px 0 6px; }
.run::after { content: ""; position: absolute; left: 4px; right: 4px; bottom: 0; height: 2px; background: #bdf49a; }
.now { background: #408c2b; }
.now::after { left: 0; right: 0; }
.idea b { position: absolute; left: 18px; top: 12px; font: 700 8px/10px "Liberation Mono", monospace; border-bottom: 1px solid #fff; }
.help { width: 22px; height: 22px; border: 2px solid #fff; border-radius: 50%; background: #1593d8; font-size: 16px; font-weight: 700; line-height: 18px; text-align: center; margin-right: 13px; }
.eng { width: 26px; margin-left: 6px; font-size: 12px; letter-spacing: -.4px; }
.clock { width: 72px; margin-left: 1px; display: flex; flex-direction: column; align-items: center; font-size: 12px; line-height: 18px; letter-spacing: -.7px; }
.note { position: relative; width: 47px; padding-left: 10px; margin-left: -1px; height: 40px; padding-top: 12px; border-right: 1px solid #72906f; margin-right: 4px; }
.note b { position: absolute; left: 17px; top: 19px; width: 17px; height: 17px; border-radius: 50%; border: 1px solid #6ba35b; background: #2f8424; font-size: 11px; line-height: 15px; text-align: center; }
```
